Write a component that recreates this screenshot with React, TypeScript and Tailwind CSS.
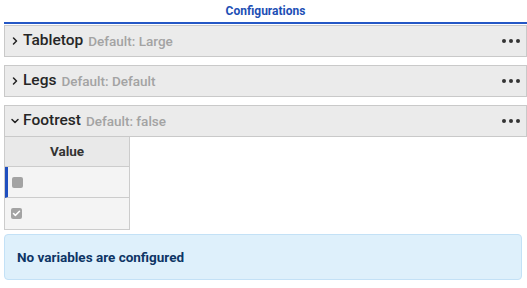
import { ChevronDown, ChevronRight, Check } from "lucide-react"

const rows = [
  { name: "Tabletop", def: "Default: Large", open: false },
  { name: "Legs", def: "Default: Default", open: false },
  { name: "Footrest", def: "Default: false", open: true },
]

function Dots() {
  return (
    <div className="flex items-center gap-[3px] pr-[6px]">
      <span className="h-[4px] w-[4px] rounded-full bg-[#333]" />
      <span className="h-[4px] w-[4px] rounded-full bg-[#333]" />
      <span className="h-[4px] w-[4px] rounded-full bg-[#333]" />
    </div>
  )
}

export default function App() {
  return (
    <div
      className="h-[288px] w-[527px] overflow-hidden bg-white"
      style={{ fontFamily: "Roboto, 'Noto Sans', sans-serif" }}
    >
      <div className="flex h-[22px] items-center justify-center pl-[4px] text-[12px] font-bold text-[#1d4fb5]">
        Configurations
      </div>
      <div className="ml-[4px] h-[2px] bg-[#2457c5]" />

      <div className="flex flex-col pl-[4px]">
        {rows.map((r, i) => (
          <div key={r.name} className={i > 0 ? "mt-[8px]" : "mt-[1px]"}>
            <div className="flex h-[32px] items-center justify-between border border-[#c9c9c9] bg-[#ebebeb]">
              <div className="flex items-center">
                {r.open ? (
                  <ChevronDown className="ml-[4px] h-[12px] w-[12px] text-[#222]" strokeWidth={3} />
                ) : (
                  <ChevronRight className="ml-[4px] h-[12px] w-[12px] text-[#222]" strokeWidth={3} />
                )}
                <span className="ml-[2px] text-[15.5px] font-medium text-[#262626]">{r.name}</span>
                <span className="ml-[5px] text-[13.5px] font-medium text-[#a3a3a3]">{r.def}</span>
              </div>
              <Dots />
            </div>
          </div>
        ))}

        <div className="w-[126px] border-x border-b border-[#cccccc]">
          <div className="flex h-[30px] items-center justify-center border-b border-[#cccccc] bg-[#e9e9e9] text-[13.5px] font-bold text-[#333]">
            Value
          </div>
          <div className="flex h-[31px] items-center border-b border-[#cccccc] border-l-[3px] border-l-[#1f4fbf] bg-[#f4f4f4] pl-[4px]">
            <span className="h-[11px] w-[11px] rounded-[2px] bg-[#a3a3a3]" />
          </div>
          <div className="flex h-[31px] items-center bg-[#f4f4f4] pl-[6px]">
            <span className="flex h-[11px] w-[11px] items-center justify-center rounded-[2px] bg-[#a3a3a3]">
              <Check className="h-[9px] w-[9px] text-white" strokeWidth={4} />
            </span>
          </div>
        </div>
      </div>

      <div className="ml-[4px] mt-[4px] flex h-[46px] w-[518px] items-center rounded-[4px] border border-[#c3e1f6] bg-[#def0fb] pl-[12px] text-[13.5px] font-bold text-[#0d3565]">
        No variables are configured
      </div>
    </div>
  )
}
